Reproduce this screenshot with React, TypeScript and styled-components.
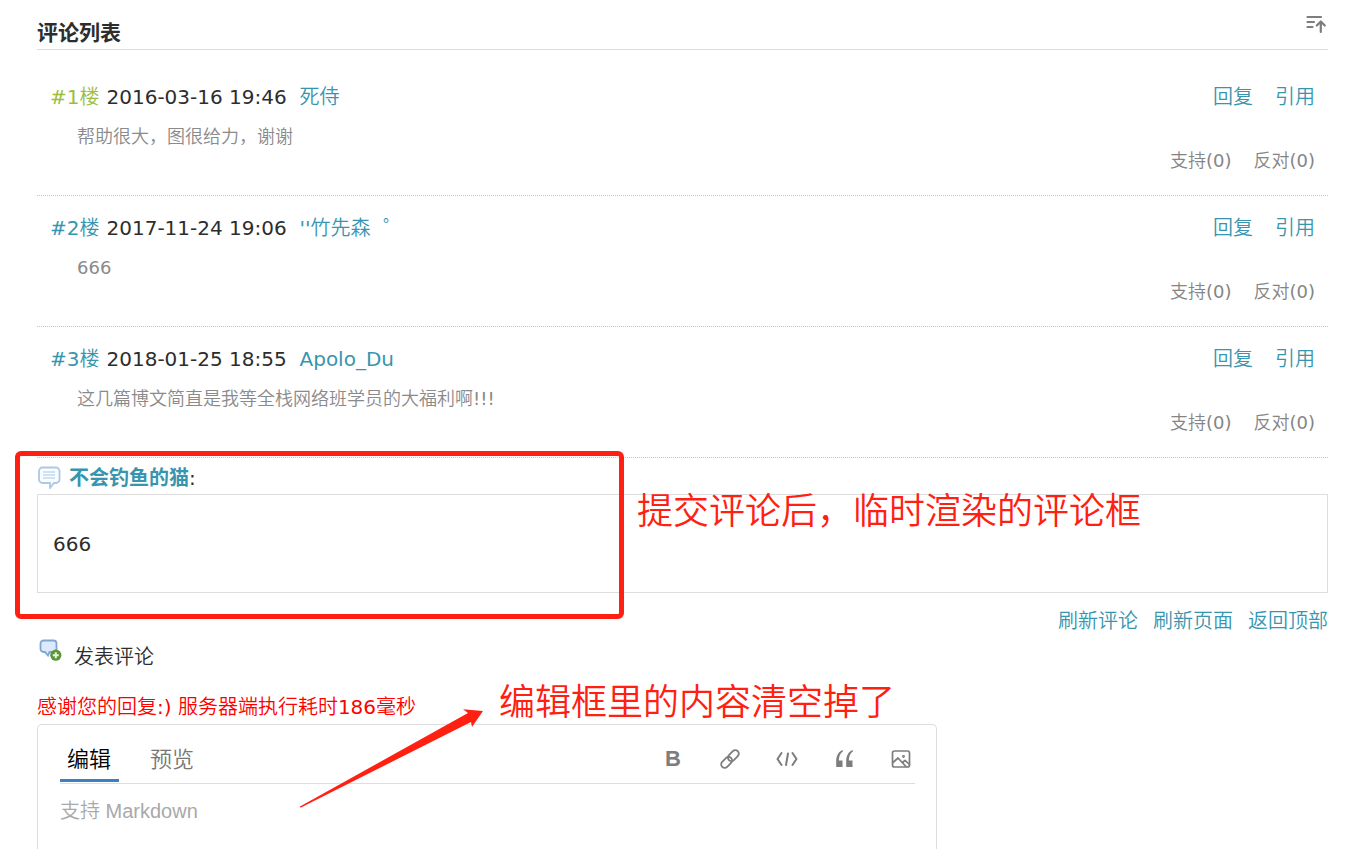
import React from 'react';
import styled, { createGlobalStyle } from 'styled-components';

const cjk = '"Noto Sans CJK SC DemiLight", "Noto Sans CJK SC", sans-serif';
const latin = `"DejaVu Sans", ${cjk}`;

const GlobalStyle = createGlobalStyle`
  * { box-sizing: border-box; }
  body {
    margin: 0;
    background: #fff;
    color: #2d2d2d;
    font: 400 20px/30px ${latin};
  }
`;

const Page = styled.main`
  position: relative;
  display: flex;
  flex-direction: column;
  min-height: 100vh;
  padding: 0 24px 0 37px;
`;

const ListHeader = styled.header`
  display: flex;
  justify-content: space-between;
  align-items: flex-end;
  height: 50px;
  padding-bottom: 3px;
  border-bottom: 1px solid #ddd;
`;

const ListTitle = styled.h2`
  margin: 0;
  font: 700 21px/30px "Noto Sans CJK SC", sans-serif;
`;

const IconButton = styled.button`
  display: flex;
  align-items: center;
  justify-content: center;
  width: 24px;
  height: 24px;
  padding: 0;
  border: 0;
  background: none;
  color: #7d7d7d;
  font: 700 22px/24px "Liberation Sans", sans-serif;
`;

const SortButton = styled(IconButton)`
  align-self: center;
`;

const CommentList = styled.ol`
  list-style: none;
  margin: 0;
  padding: 15px 0 0;
`;

const Comment = styled.li`
  height: 131px;
  padding: 17px 13px 0;
  border-bottom: 1px dotted #c4c4c4;
`;

const Row = styled.div`
  display: flex;
  justify-content: space-between;
`;

const Meta = styled.div`
  display: flex;
  gap: 7px;
`;

const Link = styled.a<{ $own?: boolean }>`
  color: ${p => (p.$own ? '#9ebd3c' : '#3795af')};
  text-decoration: none;
`;

const Posted = styled.time`
  min-width: 186px;
`;

const Actions = styled.div`
  display: flex;
  gap: 22px;
`;

const Body = styled.p`
  margin: 0;
  padding: 11px 27px 0;
  color: #8a8a8a;
  font-size: 18px;
  line-height: 28px;
`;

const Votes = styled.div`
  display: flex;
  justify-content: flex-end;
  gap: 22px;
  margin-top: -4px;
  font-size: 18px;
  line-height: 28px;
`;

const Vote = styled.a`
  color: #858585;
  text-decoration: none;
`;

const PendingTitle = styled.div`
  display: flex;
  align-items: center;
  gap: 8px;
  height: 36px;
  padding-top: 2px;
`;

const PendingAuthor = styled(Link)`
  font-weight: 700;
  font-family: "Noto Sans CJK SC", sans-serif;
`;

const PendingBox = styled.div`
  height: 99px;
  padding: 34px 15px;
  border: 1px solid #ddd;
`;

const PageLinks = styled.nav`
  display: flex;
  justify-content: flex-end;
  gap: 15px;
  padding-top: 13px;
`;

const FormTitle = styled.h3`
  display: flex;
  gap: 12px;
  height: 56px;
  margin: 0;
  padding-top: 3px;
  font-size: 20px;
  font-weight: 400;
`;

const FormLabel = styled.label`
  padding-top: 3px;
`;

const Status = styled.p`
  margin: 0;
  padding-bottom: 2px;
  color: #f00;
`;

const Editor = styled.section`
  display: flex;
  flex: 1;
  flex-direction: column;
  max-width: 900px;
  min-height: 124px;
  padding: 0 21px 0 22px;
  border: 1px solid #ddd;
  border-bottom: 0;
  border-radius: 5px 5px 0 0;
`;

const EditorBar = styled.div`
  display: flex;
  justify-content: space-between;
  align-items: center;
  height: 59px;
  border-bottom: 1px solid #ddd;
`;

const Tabs = styled.div`
  display: flex;
  align-self: flex-start;
  gap: 24px;
`;

const Tab = styled.button<{ $active?: boolean }>`
  height: 57px;
  padding: 10px 8px 0 7px;
  border: 0;
  border-bottom: 3px solid ${p => (p.$active ? '#3b7fc4' : 'transparent')};
  background: none;
  color: ${p => (p.$active ? '#000' : '#777')};
  font: 400 22px/32px ${cjk};
`;

const Tools = styled.div`
  display: flex;
  gap: 33px;
  padding: 10px 2px 0 0;
`;

const TextBox = styled.textarea`
  flex: 1;
  width: 100%;
  padding: 12px 0 0;
  border: 0;
  outline: 0;
  resize: none;
  color: #2d2d2d;
  font: 400 20px/30px "Liberation Sans", ${cjk};
  &::placeholder { color: #a9a9a9; opacity: 1; }
`;

const Frame = styled.div`
  position: absolute;
  top: 451px;
  left: 15px;
  width: 609px;
  height: 168px;
  border: 5px solid #ff2012;
  border-radius: 6px;
  pointer-events: none;
`;

const Note = styled.p<{ $x: number; $y: number }>`
  position: absolute;
  top: ${p => p.$y}px;
  left: ${p => p.$x}px;
  margin: 0;
  color: #ff2012;
  font: 400 36px/48px ${cjk};
  white-space: nowrap;
  pointer-events: none;
`;

const Arrow = styled.svg`
  position: absolute;
  top: 700px;
  left: 295px;
  pointer-events: none;
`;

const stroke = { fill: 'none', stroke: 'currentColor', strokeLinecap: 'round', strokeLinejoin: 'round' } as const;

const SortIcon = () => (
  <svg width="24" height="24" viewBox="0 0 24 24" {...stroke} strokeWidth="2.200">
    <path d="M3.500 6h13.500M3.500 11h6.500M3.500 16h5M16.800 21V11M12.800 14.500l4-4 4 4" />
  </svg>
);

const LinkIcon = () => (
  <svg width="24" height="24" viewBox="0 0 24 24" {...stroke} strokeWidth="1.800">
    <g transform="rotate(-45 12 12)">
      <rect x="1" y="8.500" width="12.500" height="7" rx="3.500" />
      <rect x="10.500" y="8.500" width="12.500" height="7" rx="3.500" />
    </g>
  </svg>
);

const CodeIcon = () => (
  <svg width="24" height="24" viewBox="0 0 24 24" {...stroke} strokeWidth="2">
    <path d="M6.500 6L2.500 12l4 6M17.500 6l4 6-4 6M13 6.500l-2 11.500" />
  </svg>
);

const QuoteIcon = () => (
  <svg width="24" height="24" viewBox="0 0 24 24" fill="currentColor">
    <path d="M10.500 3C6.500 4.500 4.200 9 4.200 14v6h6.300v-6.500H6.800C6.900 9.500 8.200 6 11 4.200zM20.500 3c-4 1.500-6.300 6-6.300 11v6h6.300v-6.500h-3.700c.1-4 1.400-7.500 4.200-9.300z" />
  </svg>
);

const ImageIcon = () => (
  <svg width="24" height="24" viewBox="0 0 24 24" {...stroke} strokeWidth="1.700">
    <rect x="3.500" y="4" width="17" height="16" rx="2" />
    <path d="M4 15.500l5-4.500 8 8.500M13.500 15.500l2.500-2.200 4.500 4.200" />
    <circle cx="14.500" cy="9.500" r=".6" />
  </svg>
);

const BubbleIcon = () => (
  <svg width="24" height="24" viewBox="0 0 24 24" fill="none">
    <path d="M5.500 2.500h13.500a3.500 3.500 0 0 1 3.500 3.500v8.500a3.500 3.500 0 0 1-3.500 3.500h-2l-4 5v-5H5.500A3.500 3.500 0 0 1 2 14.500V6a3.500 3.500 0 0 1 3.500-3.500z" fill="#fafcff" stroke="#a9c9e9" strokeWidth="1.800" />
    <path d="M6 7h12M6 10h12M6 13h12" stroke="#c3d8f1" strokeWidth="1.400" />
  </svg>
);

const AddBubbleIcon = () => (
  <svg width="25" height="24" viewBox="0 0 25 24" fill="none">
    <path d="M6.500 1.500h10a3 3 0 0 1 3 3V10a3 3 0 0 1-3 3h-4l-1.500 3.500-3-3.500H6.500a3 3 0 0 1-3-3V4.500a3 3 0 0 1 3-3z" fill="#dceaff" stroke="#80a6cf" strokeWidth="1.800" />
    <circle cx="18.800" cy="16.200" r="5.600" fill="#5d9638" />
    <path d="M18.800 13.200v6M15.800 16.200h6" stroke="#e8f5dc" strokeWidth="2" />
  </svg>
);

const comments = [
  { floor: 1, date: '2016-03-16 19:46', author: '死侍', text: '帮助很大，图很给力，谢谢' },
  { floor: 2, date: '2017-11-24 19:06', author: "''竹先森\u00a0\u00a0゜", text: '666' },
  { floor: 3, date: '2018-01-25 18:55', author: 'Apolo_Du', text: '这几篇博文简直是我等全栈网络班学员的大福利啊!!!' },
];

const tools = [
  { label: '粗体', icon: 'B' },
  { label: '链接', icon: <LinkIcon /> },
  { label: '代码', icon: <CodeIcon /> },
  { label: '引用', icon: <QuoteIcon /> },
  { label: '图片', icon: <ImageIcon /> },
];

export default function App() {
  return (
    <Page lang="zh-CN">
      <GlobalStyle />
      <ListHeader>
        <ListTitle>评论列表</ListTitle>
        <SortButton aria-label="排序"><SortIcon /></SortButton>
      </ListHeader>
      <CommentList>
        {comments.map(c => (
          <Comment key={c.floor}>
            <Row>
              <Meta>
                <Link href="#" $own={c.floor === 1}>#{c.floor}楼</Link>
                <Posted>{c.date}</Posted>
                <Link href="#">{c.author}</Link>
              </Meta>
              <Actions>
                <Link href="#">回复</Link>
                <Link href="#">引用</Link>
              </Actions>
            </Row>
            <Body>{c.text}</Body>
            <Votes>
              <Vote href="#">支持(0)</Vote>
              <Vote href="#">反对(0)</Vote>
            </Votes>
          </Comment>
        ))}
      </CommentList>
      <PendingTitle>
        <BubbleIcon />
        <span><PendingAuthor href="#">不会钓鱼的猫</PendingAuthor>:</span>
      </PendingTitle>
      <PendingBox>666</PendingBox>
      <PageLinks>
        <Link href="#">刷新评论</Link>
        <Link href="#">刷新页面</Link>
        <Link href="#">返回顶部</Link>
      </PageLinks>
      <FormTitle>
        <AddBubbleIcon />
        <FormLabel htmlFor="comment">发表评论</FormLabel>
      </FormTitle>
      <Status>感谢您的回复:) 服务器端执行耗时186毫秒</Status>
      <Editor>
        <EditorBar>
          <Tabs>
            <Tab $active>编辑</Tab>
            <Tab>预览</Tab>
          </Tabs>
          <Tools>
            {tools.map(t => <IconButton key={t.label} aria-label={t.label}>{t.icon}</IconButton>)}
          </Tools>
        </EditorBar>
        <TextBox id="comment" placeholder="支持 Markdown" />
      </Editor>
      <Frame />
      <Note $x={637} $y={484}>提交评论后，临时渲染的评论框</Note>
      <Note $x={499} $y={675}>编辑框里的内容清空掉了</Note>
      <Arrow width="195" height="112" viewBox="0 0 195 112" fill="#ff2012">
        <path d="M5 106.500L173 13l-5-3.700L188 11l-11 16-1-5L5.500 107.800z" />
      </Arrow>
    </Page>
  );
}
